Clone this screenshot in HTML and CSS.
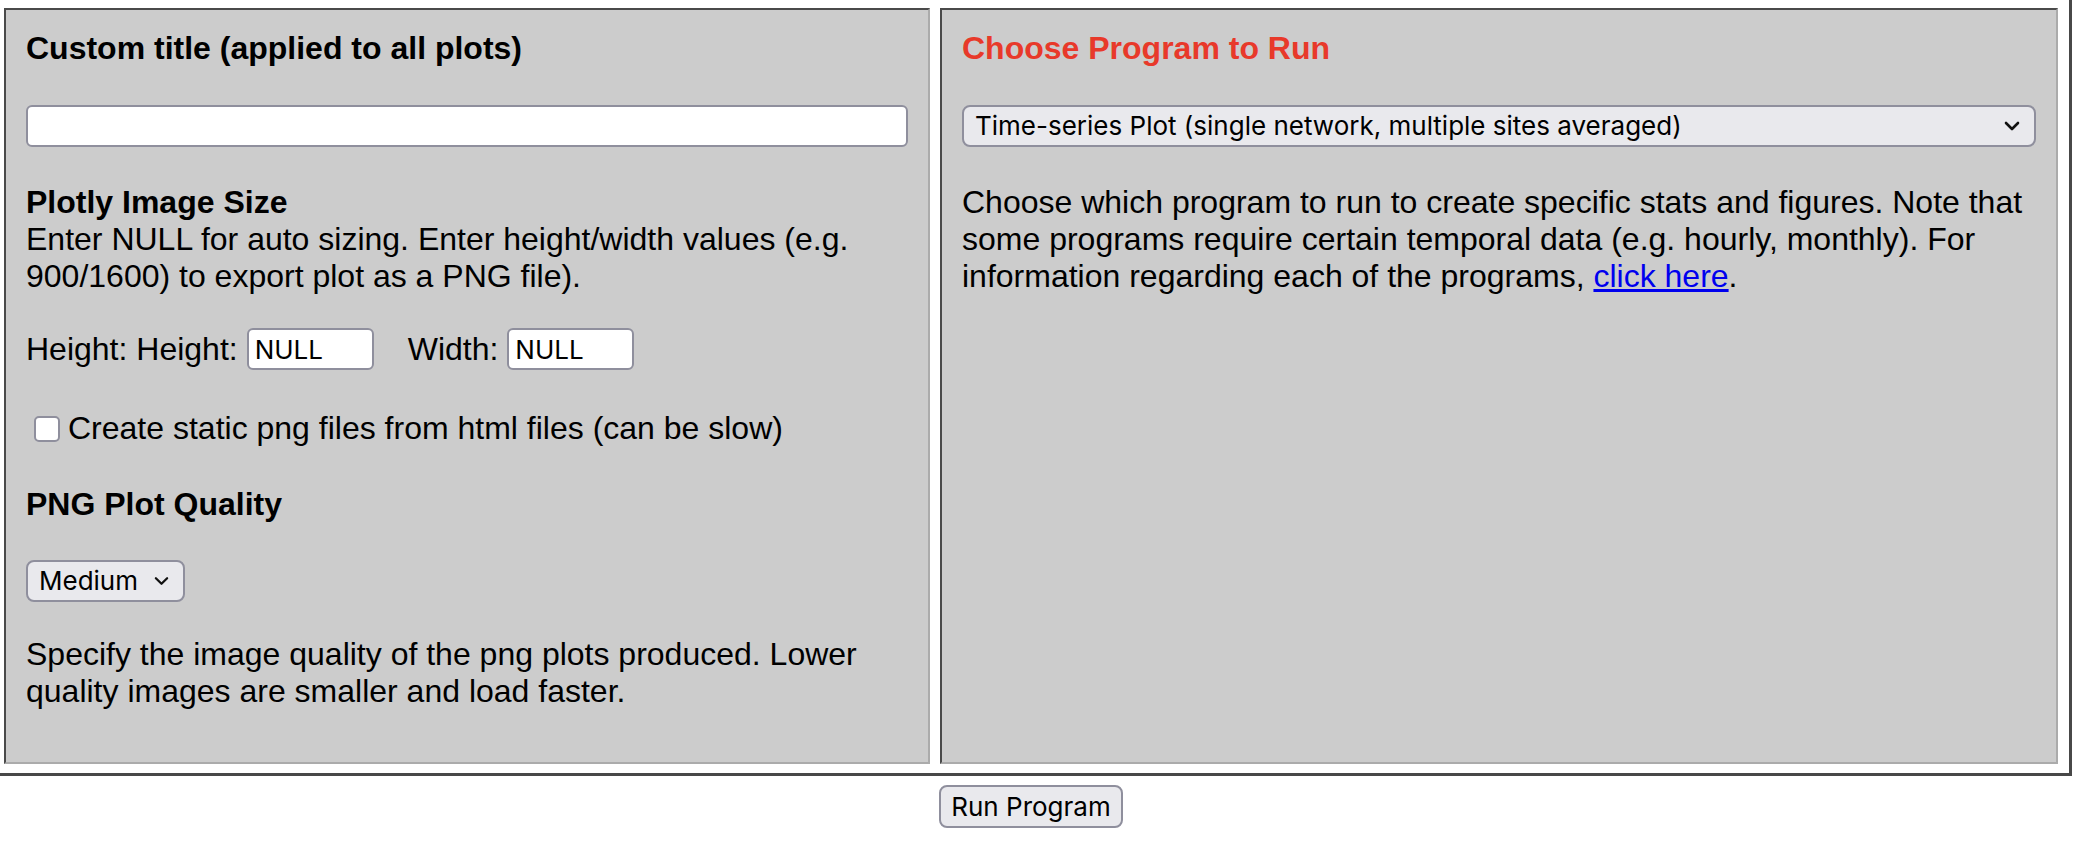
FILE: index.html
```html
<!DOCTYPE html>
<html lang="en">
<head>
<meta charset="utf-8">
<title>Run Program</title>
<link rel="stylesheet" href="styles.css">
</head>
<body>
<div class="frame">
  <div class="panels">
    <section class="panel panel-left">
      <div class="label">Custom title (applied to all plots)</div>
      <input class="text-input text-wide" type="text">
      <div class="block">
        <div class="label">Plotly Image Size</div>
        <div>Enter NULL for auto sizing. Enter height/width values (e.g. 900/1600) to export plot as a PNG file).</div>
      </div>
      <div class="size-row">
        <span>Height: Height:</span>
        <input class="text-input text-small" type="text" value="NULL">
        <span class="width-label">Width:</span>
        <input class="text-input text-small" type="text" value="NULL">
      </div>
      <label class="check-row">
        <span class="checkbox"></span>
        <span>Create static png files from html files (can be slow)</span>
      </label>
      <div class="label label-quality">PNG Plot Quality</div>
      <div class="select select-small">
        <span class="select-text">Medium</span>
        <svg class="chevron" viewBox="0 0 16 10" width="15" height="10"><path d="M2 2 L8 8 L14 2" fill="none" stroke="#111" stroke-width="2.4" stroke-linecap="round" stroke-linejoin="round"/></svg>
      </div>
      <p class="para">Specify the image quality of the png plots produced. Lower quality images are smaller and load faster.</p>
    </section>
    <section class="panel panel-right">
      <div class="label title-red">Choose Program to Run</div>
      <div class="select select-wide">
        <span class="select-text">Time-series Plot (single network, multiple sites averaged)</span>
        <svg class="chevron" viewBox="0 0 16 10" width="16" height="10"><path d="M2 2 L8 8 L14 2" fill="none" stroke="#111" stroke-width="2.6" stroke-linecap="round" stroke-linejoin="round"/></svg>
      </div>
      <p class="para para-right">Choose which program to run to create specific stats and figures. Note that some programs require certain temporal data (e.g. hourly, monthly). For information regarding each of the programs, <a href="#" class="link">click here</a>.</p>
    </section>
  </div>
</div>
<div class="actions">
  <button class="btn" type="button">Run Program</button>
</div>
</body>
</html>
```

FILE: styles.css
```css
html, body {
  margin: 0;
  padding: 0;
  background: #ffffff;
}

body {
  font-family: "Liberation Sans", Arial, Helvetica, sans-serif;
  font-size: 32px;
  line-height: 37px;
  color: #000000;
}

.frame {
  width: 2054px;
  padding: 8px 11px 9px 4px;
  border-right: 3px solid #484848;
  border-bottom: 3px solid #484848;
  box-sizing: content-box;
}

.panels {
  display: flex;
  gap: 10px;
  align-items: stretch;
}

.panel {
  background: #cccccc;
  border-style: solid;
  border-width: 2px;
  border-color: #4a4a4a #ababab #ababab #4a4a4a;
  padding: 20px 20px 52px 20px;
  box-sizing: border-box;
}

.panel-left {
  width: 926px;
  flex: none;
}

.panel-right {
  flex: 1;
}

.label {
  font-weight: bold;
}

.title-red {
  color: #e8392a;
}

.text-input {
  display: block;
  box-sizing: border-box;
  height: 42px;
  border: 2px solid #8f8f9d;
  border-radius: 6px;
  background: #ffffff;
  font-family: "Inter", "Noto Sans", sans-serif;
  font-size: 26px;
  color: #000;
  padding: 0 6px;
  margin: 0;
  outline: none;
}

.text-wide {
  width: 100%;
  margin-top: 38px;
}

.block {
  margin-top: 37px;
}

.size-row {
  margin-top: 33px;
  display: flex;
  align-items: center;
  height: 42px;
}

.text-small {
  width: 127px;
  margin-left: 9px;
}

.width-label {
  margin-left: 34px;
}

.check-row {
  margin-top: 40px;
  display: flex;
  align-items: center;
  height: 37px;
}

.checkbox {
  width: 26px;
  height: 26px;
  box-sizing: border-box;
  border: 2px solid #8f8f9d;
  border-radius: 5px;
  background: #ffffff;
  margin: 0 8px 0 8px;
  flex: none;
}

.label-quality {
  margin-top: 39px;
}

.select {
  position: relative;
  box-sizing: border-box;
  height: 42px;
  border: 2px solid #8f8f9d;
  border-radius: 8px;
  background: #e9e9ed;
  font-family: "Inter", "Noto Sans", sans-serif;
  font-size: 26px;
  line-height: 38px;
  color: #000;
  display: flex;
  align-items: center;
  justify-content: space-between;
}

.select-small {
  width: 159px;
  margin-top: 37px;
  padding: 0 14px 0 11px;
}

.select-wide {
  width: 100%;
  margin-top: 38px;
  padding: 0 14px 0 11px;
}

.chevron {
  flex: none;
}

.para {
  margin: 34px 0 0 0;
}

.para-right {
  margin-top: 37px;
}

.link {
  color: #0000ee;
  text-decoration: underline;
}

.actions {
  width: 2062px;
  display: flex;
  justify-content: center;
  padding-top: 9px;
}

.btn {
  height: 43px;
  width: 184px;
  box-sizing: border-box;
  border: 2px solid #8f8f9d;
  border-radius: 8px;
  background: #e9e9ed;
  font-family: "Inter", "Noto Sans", sans-serif;
  font-size: 26px;
  color: #000;
  padding: 0;
}
```
